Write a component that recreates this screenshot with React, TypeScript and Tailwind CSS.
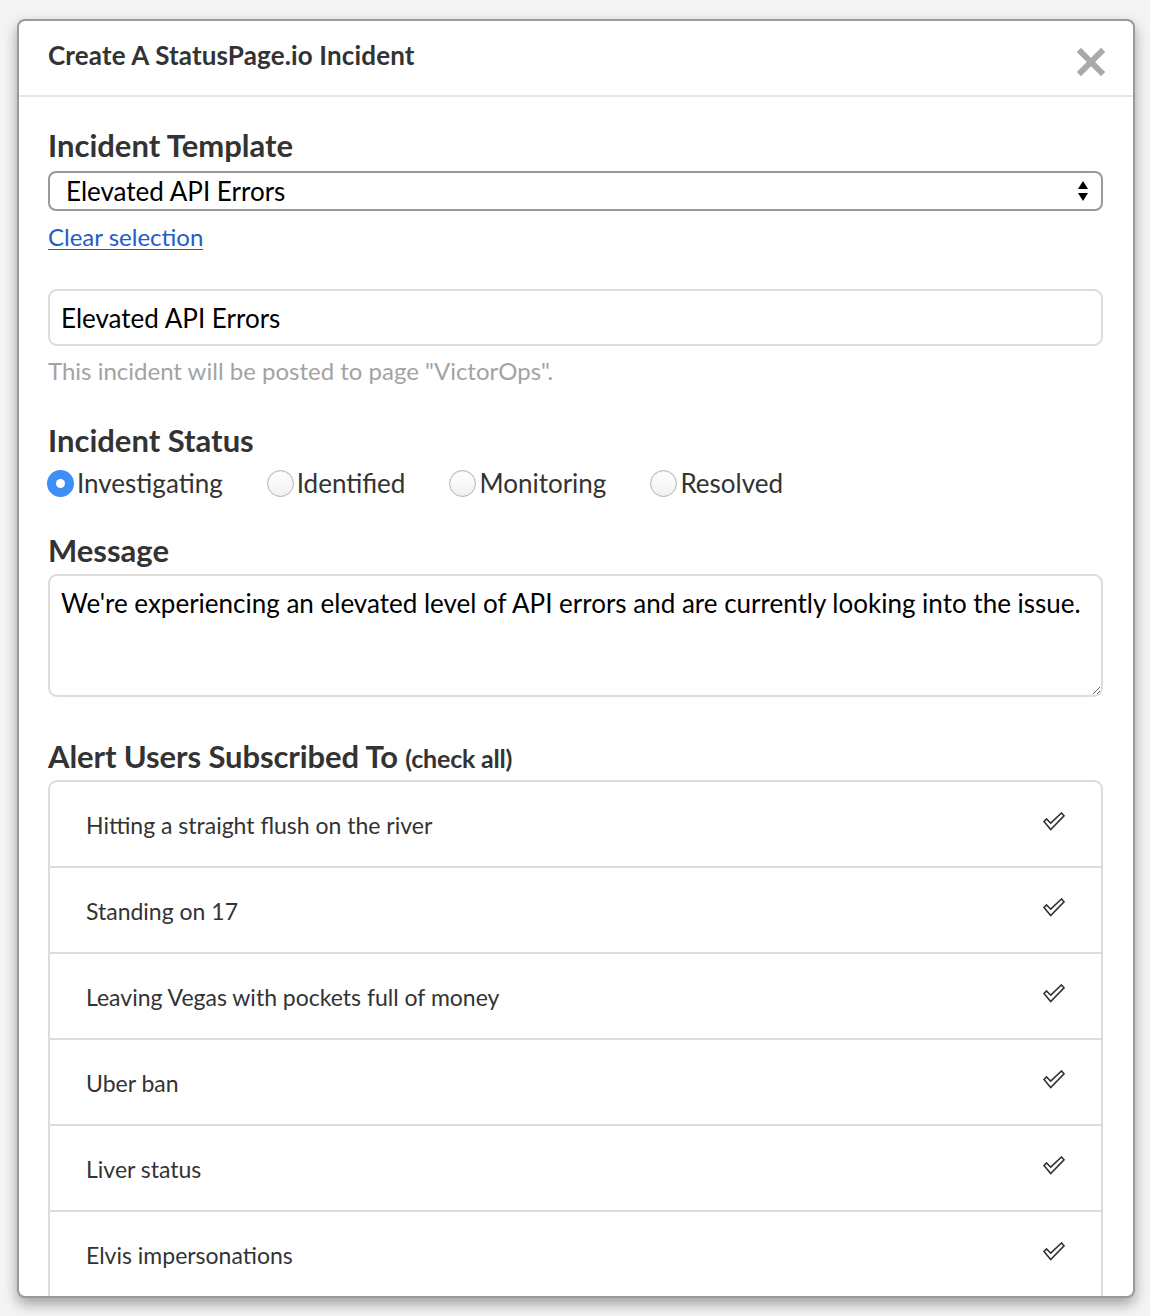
import React from "react";

const subscriptions = [
  "Hitting a straight flush on the river",
  "Standing on 17",
  "Leaving Vegas with pockets full of money",
  "Uber ban",
  "Liver status",
  "Elvis impersonations",
];

const statuses = ["Investigating", "Identified", "Monitoring", "Resolved"];

function CheckIcon(): React.JSX.Element {
  return (
    <svg width="22" height="19" viewBox="0 0 22 19" fill="none" aria-hidden="true">
      <path
        d="M1 9.5 L3.5 7 L7.7 11.2 L18.5 1 L21 3.8 L7.7 17.5 Z"
        stroke="#333"
        strokeWidth="1.6"
        strokeLinejoin="miter"
      />
    </svg>
  );
}

function CloseIcon(): React.JSX.Element {
  return (
    <svg width="28" height="28" viewBox="0 0 28 28" aria-hidden="true">
      <path d="M4 4 L24 24 M24 4 L4 24" stroke="#a9a9a9" strokeWidth="6" strokeLinecap="square" />
    </svg>
  );
}

function Radio({checked}: {checked: boolean}): React.JSX.Element {
  if (checked) {
    return (
      <span className="flex h-[27px] w-[27px] items-center justify-center rounded-full bg-[#3d8ef7]">
        <span className="h-[9px] w-[9px] rounded-full bg-white" />
      </span>
    );
  }
  return (
    <span className="h-[27px] w-[27px] rounded-full border border-[#b3b3b3] bg-gradient-to-b from-white to-[#f0f0f0] shadow-[inset_0_1px_1px_rgba(0,0,0,0.08)]" />
  );
}

export default function App(): React.JSX.Element {
  return (
    <div className="min-h-[1316px] bg-[#f4f4f4] pt-[19px] font-['Lato',sans-serif] text-[#333]">
      <div className="ml-[17px] mr-[15px] flex h-[1279px] flex-col overflow-hidden rounded-[8px] border-2 border-[#9a9a9a] bg-white shadow-[0_6px_14px_rgba(0,0,0,0.35)]">
        <header className="flex h-[76px] shrink-0 items-center justify-between border-b-2 border-[#e6e6e6] pl-[29px] pr-[28px]">
          <h1 className="-mt-[6px] text-[26px] font-bold tracking-[0.15px] text-[#333]">
            Create A StatusPage.io Incident
          </h1>
          <button type="button" aria-label="Close" className="mt-[8px]">
            <CloseIcon />
          </button>
        </header>

        <div className="flex flex-col pl-[29px] pr-[30px] pt-[32px]">
          <h2 className="text-[31px] leading-[32px] font-bold">Incident Template</h2>
          <div className="mt-[10px] flex h-[40px] items-center justify-between rounded-[8px] border-2 border-[#999] pl-[16px] pr-[12px]">
            <span className="text-[26px] text-black">Elevated API Errors</span>
            <svg width="12" height="24" viewBox="0 0 12 24" aria-hidden="true">
              <path d="M6 2 L11 10 L1 10 Z M1 14 L11 14 L6 22 Z" fill="#000" />
            </svg>
          </div>
          <a href="#" className="mt-[11px] self-start text-[24px] leading-[30px] text-[#1d5ec9] underline decoration-1 underline-offset-[3px]">
            Clear selection
          </a>

          <input
            readOnly
            value="Elevated API Errors"
            className="mt-[37px] h-[57px] rounded-[9px] border-2 border-[#dcdcdc] px-[11px] font-['Lato',sans-serif] text-[26px] text-black outline-none"
          />
          <p className="mt-[10px] text-[24px] leading-[30px] text-[#a3a3a3]">
            This incident will be posted to page "VictorOps".
          </p>

          <h2 className="mt-[38px] text-[31px] leading-[32px] font-bold">Incident Status</h2>
          <div className="mt-[11px] -ml-[1px] flex items-center gap-[44px]">
            {statuses.map((s, i) => (
              <label key={s} className="flex items-center gap-[3px] text-[26px] leading-[32px] text-[#333]">
                <Radio checked={i === 0} />
                <span>{s}</span>
              </label>
            ))}
          </div>

          <h2 className="mt-[35px] text-[31px] leading-[32px] font-bold">Message</h2>
          <textarea
            readOnly
            defaultValue="We're experiencing an elevated level of API errors and are currently looking into the issue."
            className="mt-[8px] h-[123px] resize-y rounded-[9px] border-2 border-[#dcdcdc] px-[11px] pt-[10px] font-['Lato',sans-serif] text-[26px] leading-[34px] text-black outline-none"
          />

          <h2 className="mt-[43px] text-[31px] leading-[32px] font-bold tracking-[-0.1px]">
            Alert Users Subscribed To <span className="text-[25px] tracking-[-0.2px]">(check all)</span>
          </h2>
          <ul className="mt-[6px] rounded-t-[9px] border-2 border-[#dcdcdc]">
            {subscriptions.map((s, i) => (
              <li
                key={s}
                className={
                  i === 0
                    ? "flex h-[84px] items-center justify-between pl-[36px] pr-[36px]"
                    : "flex h-[86px] items-center justify-between border-t-2 border-[#dcdcdc] pl-[36px] pr-[36px]"
                }
              >
                <span className="mt-[2px] text-[23px] text-[#333]">{s}</span>
                <span className="-mt-[6px]">
                  <CheckIcon />
                </span>
              </li>
            ))}
          </ul>
        </div>
      </div>
    </div>
  );
}
